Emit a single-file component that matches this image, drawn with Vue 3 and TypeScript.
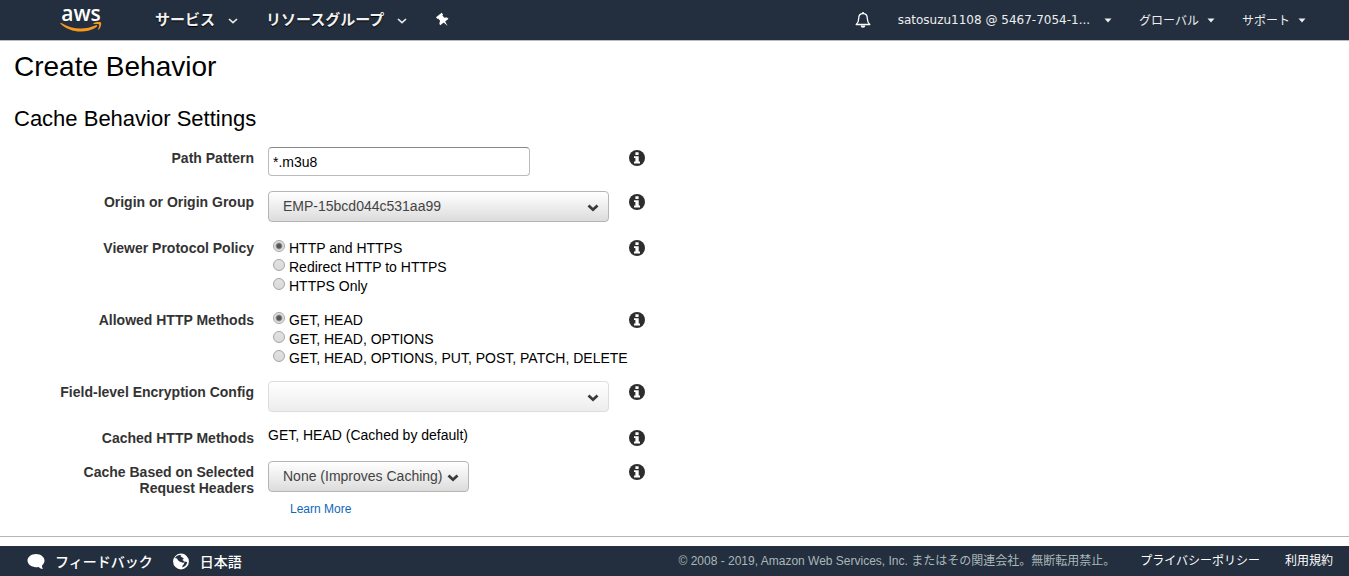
<script setup lang="ts">
import { ref } from 'vue'

interface RadioGroup {
  id: string
  label: string
  options: string[]
}

const pathPattern = ref('*.m3u8')
const origin = ref('EMP-15bcd044c531aa99')
const headers = ref('None (Improves Caching)')
const selected = ref<Record<string, string>>({
  policy: 'HTTP and HTTPS',
  methods: 'GET, HEAD',
})

const radioGroups: RadioGroup[] = [
  {
    id: 'policy',
    label: 'Viewer Protocol Policy',
    options: ['HTTP and HTTPS', 'Redirect HTTP to HTTPS', 'HTTPS Only'],
  },
  {
    id: 'methods',
    label: 'Allowed HTTP Methods',
    options: ['GET, HEAD', 'GET, HEAD, OPTIONS', 'GET, HEAD, OPTIONS, PUT, POST, PATCH, DELETE'],
  },
]
</script>

<template>
  <svg class="defs" aria-hidden="true">
    <symbol id="info" viewBox="0 0 16 16">
      <circle cx="8" cy="8" r="8" fill="#2d2d2d" />
      <path d="M6.400 2.300h3.200v2.700H6.400zM5 6.200h4.700v5.300H11v1.900H5v-1.900h1.400V8H5z" fill="#fff" />
    </symbol>
    <symbol id="chevron" viewBox="0 0 12 8">
      <path d="M1.500 1.500 6 5.700l4.500-4.200" fill="none" stroke="#3a3a3a" stroke-width="2.800" />
    </symbol>
    <symbol id="nav-chevron" viewBox="0 0 10 6">
      <path d="M1 1l4 3.700L9 1" fill="none" stroke="#e8e8e8" stroke-width="1.700" />
    </symbol>
    <symbol id="caret" viewBox="0 0 8 5">
      <path d="M.5.5h7L4 4.500z" fill="#eee" />
    </symbol>
  </svg>

  <div class="page">
    <header class="top">
      <a class="logo" href="#" aria-label="AWS">
        <span class="logo-text">aws</span>
        <svg class="smile" viewBox="0 0 42 10" aria-hidden="true">
          <path d="M.4 1.300C.7.7 1.200.8 1.800 1.200 7.500 4.800 14 6.500 20.500 6.500c5.300 0 10.700-1.300 15.300-3.300 1.200-.5 2 .7.9 1.500C32.500 8 26 9.500 20.500 9.500 13 9.500 6 6.700.7 1.900.4 1.700.3 1.500.4 1.300z" fill="#f7981f" />
          <path d="M33.300 1.400C35.500-.1 40-.3 40.900.5c.9.900-.2 5.500-2.200 7.200-.4.300-.8.100-.6-.3.600-1.500 1.500-4 .9-4.900-.6-.8-3.500-.6-5.300-.4-.6.100-.8-.4-.4-.7z" fill="#f7981f" />
        </svg>
      </a>
      <nav class="main-nav">
        <button type="button" class="nav-button">サービス<svg class="nav-chevron"><use href="#nav-chevron" /></svg></button>
        <button type="button" class="nav-button">リソースグループ<svg class="nav-chevron"><use href="#nav-chevron" /></svg></button>
        <button type="button" class="nav-button" aria-label="ピン">
          <svg class="pin" viewBox="0 0 16 16">
            <path transform="rotate(-38 8 8)" d="M4.200 1.500h7.200v2.300h-1v3.200c1.700.6 2.700 1.700 2.700 3.500H8.800L7.900 15.500 7 10.500H2.500c0-1.800 1-2.900 2.700-3.500V3.800h-1z" fill="#fff" />
          </svg>
        </button>
      </nav>
      <nav class="account-nav">
        <button type="button" class="bell-button" aria-label="通知">
          <svg class="bell" viewBox="0 0 16 18">
            <path d="M1.200 13.500c2-1.800 2.500-3 2.500-6C3.700 4.700 5.300 2.700 8 2.700s4.300 2 4.300 4.800c0 3 .5 4.200 2.500 6z" fill="none" stroke="#fff" stroke-width="1.300" stroke-linejoin="round" />
            <path d="M7.200 1h1.600v2H7.200zM5.700 14.500h4.600C10.200 16 9.300 16.700 8 16.700S5.800 16 5.700 14.500z" fill="#fff" />
          </svg>
        </button>
        <button type="button" class="account-button account">satosuzu1108 @ 5467-7054-1...<svg class="caret"><use href="#caret" /></svg></button>
        <button type="button" class="account-button">グローバル<svg class="caret"><use href="#caret" /></svg></button>
        <button type="button" class="account-button">サポート<svg class="caret"><use href="#caret" /></svg></button>
      </nav>
    </header>

    <main class="content">
      <h1>Create Behavior</h1>
      <h2>Cache Behavior Settings</h2>

      <form class="form" @submit.prevent>
        <div class="row">
          <label class="label" for="path">Path Pattern</label>
          <div class="field"><input id="path" v-model="pathPattern" class="text-input" type="text" /></div>
          <button type="button" class="info" aria-label="Path Pattern help"><svg><use href="#info" /></svg></button>
        </div>

        <div class="row">
          <label class="label" for="origin">Origin or Origin Group</label>
          <div class="field">
            <div class="select wide">
              <select id="origin" v-model="origin"><option>EMP-15bcd044c531aa99</option></select>
              <svg class="chevron"><use href="#chevron" /></svg>
            </div>
          </div>
          <button type="button" class="info" aria-label="Origin help"><svg><use href="#info" /></svg></button>
        </div>

        <div v-for="group in radioGroups" :key="group.id" class="row" role="radiogroup" :aria-labelledby="group.id">
          <span :id="group.id" class="label">{{ group.label }}</span>
          <div class="field">
            <label v-for="option in group.options" :key="option" class="option">
              <input v-model="selected[group.id]" type="radio" :name="group.id + '-choice'" :value="option" />
              <span>{{ option }}</span>
            </label>
          </div>
          <button type="button" class="info" :aria-label="group.label + ' help'"><svg><use href="#info" /></svg></button>
        </div>

        <div class="row">
          <label class="label" for="encryption">Field-level Encryption Config</label>
          <div class="field">
            <div class="select wide">
              <select id="encryption" disabled><option></option></select>
              <svg class="chevron"><use href="#chevron" /></svg>
            </div>
          </div>
          <button type="button" class="info" aria-label="Encryption help"><svg><use href="#info" /></svg></button>
        </div>

        <div class="row">
          <span class="label">Cached HTTP Methods</span>
          <div class="field static">GET, HEAD (Cached by default)</div>
          <button type="button" class="info" aria-label="Cached methods help"><svg><use href="#info" /></svg></button>
        </div>

        <div class="row">
          <label class="label" for="headers">Cache Based on Selected Request Headers</label>
          <div class="field">
            <div class="select compact">
              <select id="headers" v-model="headers"><option>None (Improves Caching)</option></select>
              <svg class="chevron"><use href="#chevron" /></svg>
            </div>
            <a class="learn" href="#">Learn More</a>
          </div>
          <button type="button" class="info" aria-label="Request headers help"><svg><use href="#info" /></svg></button>
        </div>
      </form>
    </main>

    <footer class="bottom">
      <button type="button" class="foot-button">
        <svg class="foot-icon" viewBox="0 0 18 17">
          <path d="M9 1c4.700 0 8.500 2.900 8.500 6.600 0 2-1 3.700-2.500 4.900 0 1.500.4 2.700 1 3.500-1.800-.2-3.300-1-4.300-2.100-.9.200-1.800.3-2.700.3-4.700 0-8.500-2.900-8.500-6.600S4.300 1 9 1z" fill="#fff" />
        </svg>
        フィードバック
      </button>
      <button type="button" class="foot-button">
        <svg class="foot-icon" viewBox="0 0 18 17">
          <circle cx="9" cy="8.500" r="7.900" fill="#fff" />
          <path d="M3 5C4.200 3 6 2 8 1.900l1.700 1-1.200.8 2 .8 1.400 1.200-1.700 1.200 1.800 1.100-.5 2.100-2-.9-2-.8-1.700-1.300-.7-1.700-1.400-.2zM12.500 8.200l2.700 1c-.3 1.900-1.400 3.500-2.900 4.400l-2.300.8.800-2.200 1.200-1.300z" fill="#232f3e" />
        </svg>
        日本語
      </button>
      <div class="legal">
        <span class="copyright">© 2008 - 2019, Amazon Web Services, Inc. またはその関連会社。無断転用禁止。</span>
        <a href="#">プライバシーポリシー</a>
        <a href="#">利用規約</a>
      </div>
    </footer>
  </div>
</template>

<style>
body {
  background: #fff;
}
</style>

<style scoped>
* {
  box-sizing: border-box;
}
.defs {
  display: none;
}
.page {
  display: flex;
  flex-direction: column;
  min-height: 100vh;
  color: #000;
  font: 14px/16px "Liberation Sans", "Noto Sans CJK JP", sans-serif;
}
svg {
  display: block;
  flex: none;
}
button {
  padding: 0;
  border: 0;
  background: none;
  cursor: pointer;
}
.top {
  display: flex;
  align-items: center;
  height: 41px;
  padding: 0 43px 0 60px;
  border-bottom: 1px solid #bbb;
  background: #232f3e;
}
.logo {
  width: 42px;
  padding-bottom: 4px;
  color: #fff;
  text-decoration: none;
  text-align: center;
}
.logo-text {
  display: block;
  font: 600 21px/18px "Open Sans", sans-serif;
}
.smile {
  width: 42px;
  height: 10px;
}
.main-nav {
  display: flex;
  align-items: center;
  gap: 28px;
  margin-left: 53px;
  padding-bottom: 2px;
}
.nav-button {
  display: flex;
  align-items: center;
  gap: 13px;
  color: #f2f2f2;
  font: bold 15px/20px "Noto Sans CJK JP", sans-serif;
  text-shadow: 0 1px 1px #000;
}
.nav-chevron {
  width: 10px;
  height: 6px;
  margin-top: 3px;
}
.pin {
  width: 16px;
  height: 16px;
  margin-top: 2px;
}
.account-nav {
  display: flex;
  align-items: center;
  gap: 27px;
  margin-left: auto;
}
.bell {
  width: 16px;
  height: 18px;
}
.account-button {
  display: flex;
  align-items: center;
  gap: 8px;
  color: #eee;
  font: 12px/20px "Noto Sans CJK JP", sans-serif;
}
.account {
  gap: 14px;
  font: 12px/20px "DejaVu Sans", sans-serif;
}
.caret {
  width: 8px;
  height: 5px;
}
.content {
  flex: 1;
  margin-bottom: 9px;
  padding: 10px 14px 19px;
  border-bottom: 1px solid #b5b5b5;
}
h1,
h2 {
  margin: 0;
  font-weight: normal;
}
h1 {
  font-size: 28px;
  line-height: 32px;
}
h2 {
  margin: 23px 0 15px;
  font-size: 22px;
  line-height: 26px;
}
.form {
  display: grid;
  gap: 15px;
}
.row {
  display: grid;
  grid-template-columns: 240px 341px 16px;
  column-gap: 14px;
  align-items: start;
}
.label {
  padding: 3px 0 0 40px;
  color: #333;
  font-weight: bold;
  text-align: right;
}
.field {
  white-space: nowrap;
}
.static {
  min-height: 19px;
}
.info {
  margin: 3px 0 0 6px;
}
.info svg {
  width: 16px;
  height: 16px;
}
.text-input {
  display: block;
  width: 262px;
  height: 29px;
  padding: 0 4px;
  border: 1px solid #bbb;
  border-top-color: #888;
  border-radius: 4px;
  background: #fff;
  color: #000;
  font: inherit;
}
.select {
  display: grid;
  align-items: center;
}
.wide {
  width: 341px;
}
.compact {
  width: 201px;
}
.select > * {
  grid-area: 1 / 1;
}
.select select {
  width: 100%;
  height: 31px;
  padding: 0 24px 1px 14px;
  appearance: none;
  border: 1px solid #b5b5b5;
  border-radius: 4px;
  background: linear-gradient(#fff, #dcdcdc);
  color: #444;
  font: inherit;
}
.select select:disabled {
  border-color: #ddd;
  background: linear-gradient(#fff, #ededed);
  opacity: 1;
}
.chevron {
  justify-self: end;
  width: 12px;
  height: 8px;
  margin: 3px 10px 0 0;
  pointer-events: none;
}
.option {
  display: flex;
  align-items: flex-start;
  gap: 4px;
  height: 19px;
  padding: 0 0 0 5px;
}
.option span {
  padding-top: 3px;
}
.option input {
  appearance: none;
  flex: none;
  width: 12px;
  height: 12px;
  margin: 3px 0 0;
  border: 1px solid #a5a5a5;
  border-radius: 50%;
  background: linear-gradient(#e2e2e2, #dadada);
}
.option input:checked {
  background: radial-gradient(circle, #555 0 2px, #e4e4e4 4px);
}
.learn {
  display: block;
  width: max-content;
  margin: 9px 0 0 22px;
  color: #1166bb;
  font-size: 12px;
  text-decoration: none;
}
.bottom {
  display: flex;
  align-items: center;
  gap: 19px;
  height: 30px;
  padding: 0 16px 0 27px;
  background: #232f3e;
}
.foot-button {
  display: flex;
  align-items: center;
  gap: 10px;
  color: #fff;
  font: 500 14px/20px "Noto Sans CJK JP", sans-serif;
}
.foot-icon {
  width: 18px;
  height: 17px;
}
.legal {
  display: flex;
  gap: 25px;
  margin-left: auto;
  color: #aab7b8;
  font-size: 12px;
}
.legal a {
  color: #fff;
  text-decoration: none;
}
</style>
